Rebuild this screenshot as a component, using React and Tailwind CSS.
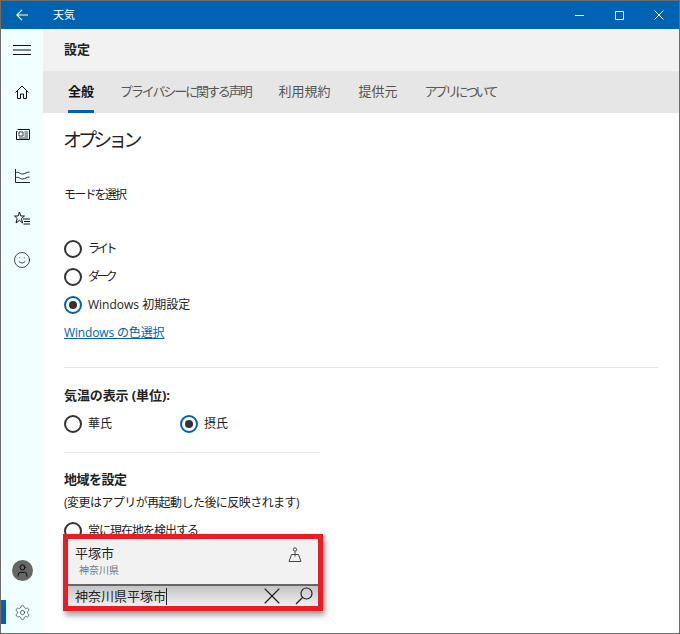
import { X, Smile, Settings, User } from "lucide-react";

const Radio = ({ label, checked, tracking }) => (
  <label className="flex items-center h-[28px] gap-[6px] text-[12px] text-[#222]">
    {checked ? (
      <span className="w-[18px] h-[18px] rounded-full border-2 border-[#0063b1] flex items-center justify-center">
        <span className="w-[8px] h-[8px] rounded-full bg-[#333]"></span>
      </span>
    ) : (
      <span className="w-[18px] h-[18px] rounded-full border-2 border-[#333]"></span>
    )}
    <span className={tracking}>{label}</span>
  </label>
);

const MenuIcon = () => (
  <svg width="18" height="10" viewBox="0 0 18 10" fill="none" stroke="#111" strokeWidth="1">
    <path d="M0 .5h18M0 5h18M0 9.500h18" />
  </svg>
);

const HomeIcon = () => (
  <svg width="14" height="14" viewBox="0 0 14 14" fill="none" stroke="#111" strokeWidth="1">
    <path d="M.5 7.500L7 1l6.500 6.500" />
    <path d="M2.500 5.500v8h3V9h3v4.500h3v-8" />
  </svg>
);

const ChartIcon = () => (
  <svg width="15" height="14" viewBox="0 0 15 14" fill="none" stroke="#1a2530" strokeWidth="1">
    <path d="M.5 0v13.500H15" />
    <path d="M.5 4c3-2 4 1 7 1s4-2 7-2" />
    <path d="M.5 9c3-2 4 1 7 1s4-2 7-2" />
  </svg>
);

const NewsIcon = () => (
  <svg width="15" height="11" viewBox="0 0 15 11" fill="none" stroke="#111" strokeWidth="1">
    <path d="M2.500 .5h12v10h-13v-8h1" />
    <path d="M4 3h4v4H4zM9.500 3H13M9.500 5H13M9.500 7H13M4 9h9" strokeWidth=".8" />
  </svg>
);

const FavIcon = () => (
  <svg width="16" height="15" viewBox="0 0 16 15" fill="none" stroke="#111" strokeWidth="1">
    <path d="M5.500 1l1.300 4H10.500L7.500 7.500l1 4.500-3-2.700L2 12l1.200-4.500L.5 5h3.600z" />
    <path d="M9 8h7M10 10.500h6M9.500 13h6.500" />
  </svg>
);

const PinIcon = () => (
  <svg width="14" height="16" viewBox="0 0 14 16" fill="none" stroke="#444" strokeWidth="1">
    <circle cx="7" cy="2.500" r="1.700" />
    <path d="M7 4.500v5" />
    <path d="M3.500 7.500h7L13 14.500H1z" />
  </svg>
);

const SearchIcon = () => (
  <svg width="18" height="18" viewBox="0 0 18 18" fill="none" stroke="#222" strokeWidth="1.200">
    <circle cx="11.500" cy="6.500" r="5.500" />
    <path d="M7.500 10.500L1 17" />
  </svg>
);

export default function App() {
  return (
    <div
      className="relative w-[680px] h-[634px] border border-[#6b6b6b] bg-white flex flex-col overflow-hidden"
      style={{ fontFamily: '"Open Sans", "Noto Sans CJK JP", sans-serif' }}
    >
      <div className="h-[28px] bg-[#0063b1] text-white flex items-center shrink-0">
        <div className="w-[42px] flex justify-center">
          <svg width="12" height="12" viewBox="0 0 12 12" fill="none" stroke="white" strokeWidth="1.100">
            <path d="M6 .8L.8 6 6 11.200M.8 6H12" />
          </svg>
        </div>
        <span className="ml-[10px] text-[11px]">天気</span>
        <div className="ml-auto flex items-center">
          <div className="w-[40px] flex justify-center">
            <svg width="9" height="9" viewBox="0 0 9 9" stroke="white" strokeWidth="1"><path d="M0 4.500h9" /></svg>
          </div>
          <div className="w-[40px] flex justify-center">
            <svg width="9" height="9" viewBox="0 0 9 9" fill="none" stroke="white" strokeWidth="1"><path d="M.5.5h8v8h-8z" /></svg>
          </div>
          <div className="w-[40px] flex justify-center">
            <svg width="10" height="10" viewBox="0 0 10 10" stroke="white" strokeWidth="1"><path d="M.5.5l9 9M9.500.5l-9 9" /></svg>
          </div>
        </div>
      </div>

      <div className="flex flex-1 min-h-0">
        <aside className="w-[42px] bg-[#f0ffff] flex flex-col items-center shrink-0 text-[#111]">
          <div className="h-[42px] flex items-center justify-center"><MenuIcon /></div>
          <div className="h-[42px] flex items-center justify-center"><HomeIcon /></div>
          <div className="h-[42px] flex items-center justify-center"><NewsIcon /></div>
          <div className="h-[42px] flex items-center justify-center"><ChartIcon /></div>
          <div className="h-[42px] flex items-center justify-center"><FavIcon /></div>
          <div className="h-[42px] flex items-center justify-center"><Smile size={18} strokeWidth={1} /></div>
          <div className="mt-auto h-[42px] flex items-center justify-center">
            <div className="w-[21px] h-[21px] rounded-full bg-[#666] flex items-center justify-center text-black">
              <User size={15} strokeWidth={1.4} />
            </div>
          </div>
          <div className="relative w-full h-[42px] flex items-center justify-center">
            <div className="absolute left-0 top-[9px] w-[5px] h-[24px] bg-[#0063b1]"></div>
            <Settings size={17} strokeWidth={0.9} className="text-[#1f2d3a]" />
          </div>
        </aside>

        <main className="flex-1 min-w-0 flex flex-col">
          <div className="h-[42px] bg-[#f2f2f2] flex items-center pl-[21px] text-[13px] font-bold text-[#222] shrink-0">
            設定
          </div>
          <div className="h-[42px] bg-[#e6e6e6] flex items-center pl-[25px] gap-[28px] text-[13px] text-[#555] shrink-0">
            <span className="relative font-bold text-[#111] mr-[-2px]">
              全般
              <span className="absolute left-0 right-0 top-[28px] h-[3px] bg-[#0063b1]"></span>
            </span>
            <span className="tracking-[-2.100px]">プライバシーに関する声明</span>
            <span>利用規約</span>
            <span>提供元</span>
            <span className="tracking-[-2.800px] ml-[-1px]">アプリについて</span>
          </div>

          <div className="flex-1 pl-[21px] pr-[21px] pt-[13px]">
            <h1 className="text-[19px] leading-[28px] text-[#222] tracking-[-3.900px] ml-[-1px]">オプション</h1>
            <p className="mt-[32px] text-[12px] leading-[18px] text-[#222] tracking-[-1.800px]">モードを選択</p>
            <div className="mt-[31px]">
              <Radio label="ライト" tracking="tracking-[-3.300px]" />
              <Radio label="ダーク" tracking="tracking-[-3.300px]" />
              <Radio label="Windows 初期設定" checked />
            </div>
            <a className="block mt-[5px] text-[12px] leading-[18px] text-[#0063b1] underline tracking-[-0.150px]">Windows の色選択</a>
            <div className="mt-[25px] h-[1px] bg-[#e6e6e6]"></div>
            <p className="mt-[18px] text-[13px] leading-[18px] font-bold text-[#222] tracking-[-0.100px]">気温の表示 (単位):</p>
            <div className="flex mt-[6px]">
              <div className="w-[116px]"><Radio label="華氏" /></div>
              <Radio label="摂氏" checked />
            </div>
            <div className="mt-[14px] h-[1px] w-[256px] bg-[#e6e6e6]"></div>
            <p className="mt-[17px] text-[13px] leading-[18px] font-bold text-[#222] tracking-[-0.500px]">地域を設定</p>
            <p className="mt-[6px] text-[12px] leading-[18px] text-[#222] tracking-[-0.550px]">(変更はアプリが再起動した後に反映されます)</p>
            <div className="mt-[5px]"><Radio label="常に現在地を検出する" tracking="tracking-[-1px]" /></div>
          </div>
        </main>
      </div>

      <div className="absolute left-[62px] top-[533px] w-[260px] h-[77px] border-[5px] border-[#ed1c24] bg-[#f2f2f2] flex flex-col shadow-[2px_4px_6px_rgba(0,0,0,0.4)]">
        <div className="h-[45px] flex items-start justify-between pl-[7px] pr-[16px] shrink-0">
          <div>
            <div className="text-[13px] leading-[18px] mt-[5px] text-[#222]">平塚市</div>
            <div className="text-[10px] leading-[14px] mt-[1px] ml-[4px] text-[#777]">神奈川県</div>
          </div>
          <div className="mt-[8px]"><PinIcon /></div>
        </div>
        <div className="h-[2px] bg-[#666] shrink-0"></div>
        <div className="flex-1 min-h-0 flex items-center bg-gradient-to-b from-[#c4c4c4] to-[#f0f0f0] pl-[7px] pr-[5px] overflow-hidden">
          <span className="text-[13px] text-[#222] border-r border-[#222] leading-[17px]">神奈川県平塚市</span>
          <X size={28} strokeWidth={1} className="ml-auto mr-[9px] text-[#222] shrink-0" />
          <SearchIcon />
        </div>
      </div>
    </div>
  );
}
